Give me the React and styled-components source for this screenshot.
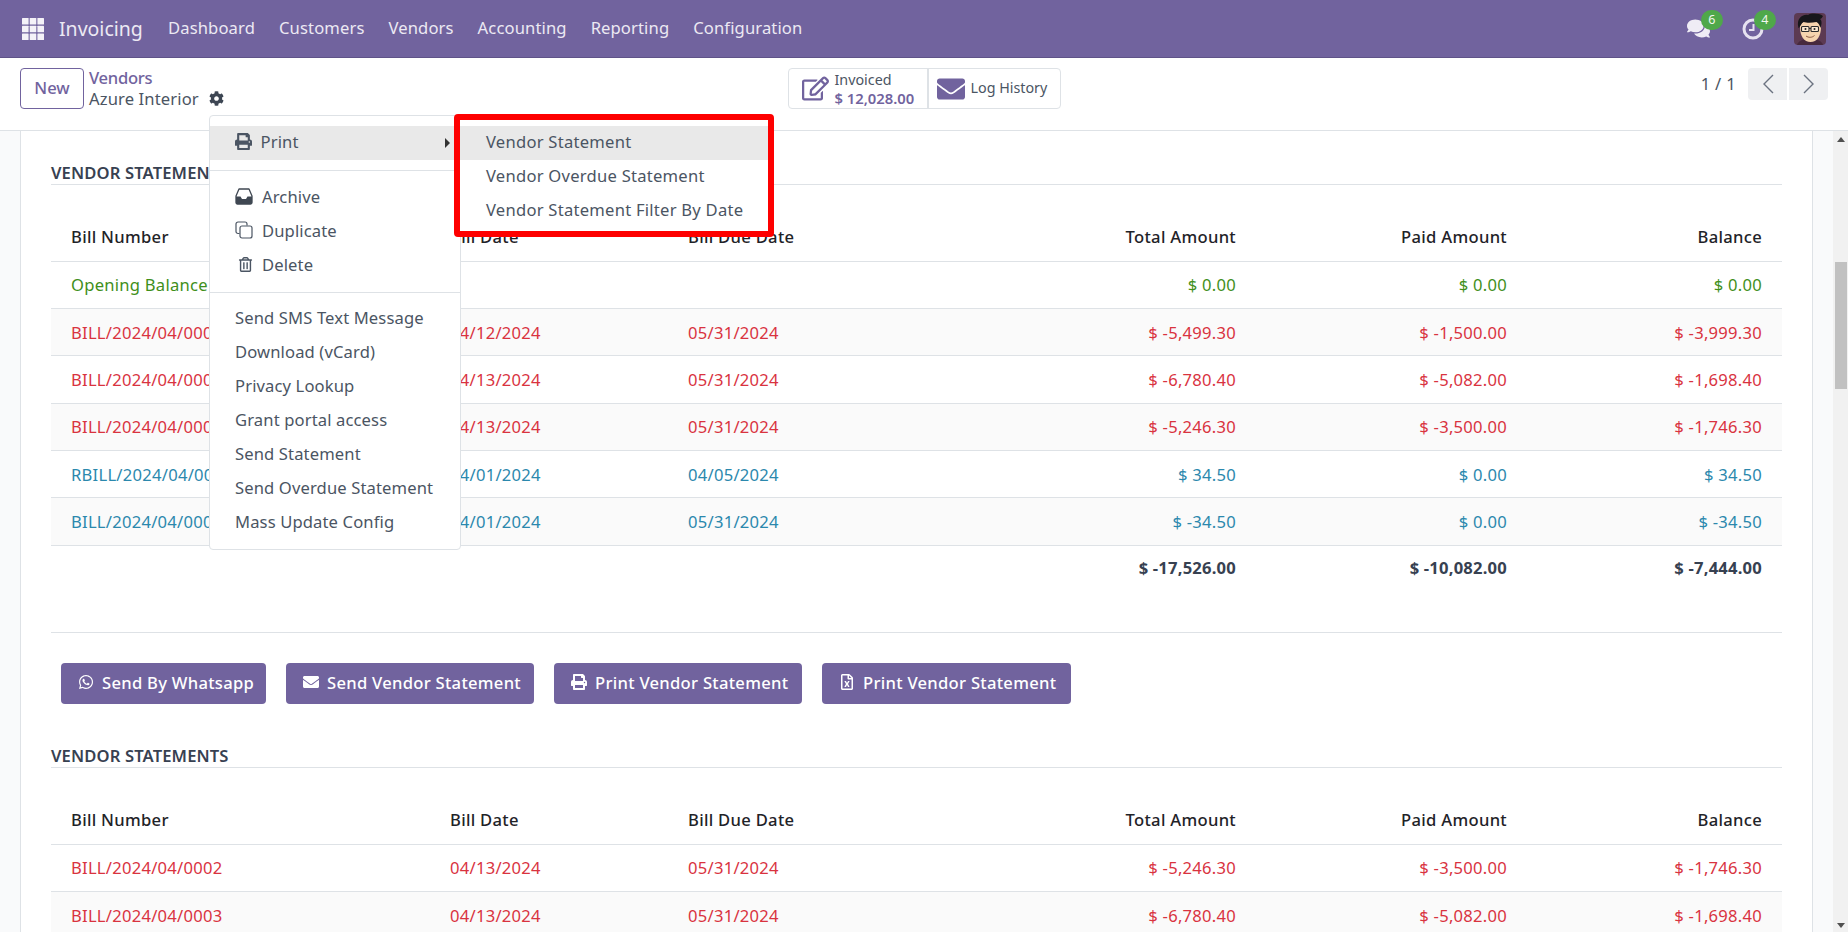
import React from "react";
import styled, { createGlobalStyle } from "styled-components";
import { FaComments, FaCog, FaPrint, FaRegTrashAlt, FaRegEdit, FaEnvelope, FaWhatsapp, FaRegFileExcel } from "react-icons/fa";

const font = `"Noto Sans", "Open Sans", sans-serif`;
const Global = createGlobalStyle`
  html, body { margin: 0; padding: 0; height: 100%; overflow: hidden; background: #fff; }
  body { font-family: ${font}; font-size: 16.6px; letter-spacing: .12px; color: #374151; }
  * { box-sizing: border-box; }
`;

const Page = styled.div`display:flex;flex-direction:column;height:932px;width:1848px;overflow:hidden;position:relative;`;
const NavBar = styled.header`
  height:58px;flex:none;background:#71639e;color:#f3f1f7;display:flex;align-items:center;padding:0 22px 0 22px;border-bottom:1px solid #5f5388;
`;
const AppsIcon = styled.svg`width:22px;height:22px;fill:#f4f2f8;flex:none;`;
const Brand = styled.span`font-size:19.5px;margin-left:15px;width:109px;flex:none;color:#ece9f3;letter-spacing:0;`;
const NavItem = styled.span`margin-right:24px;color:#ece9f3;padding-bottom:2px;`;
const Spacer = styled.div`flex:1;`;
const Systray = styled.div`position:relative;width:24px;height:22px;margin-right:${p=>p.$mr}px;color:#efecf5;display:flex;align-items:center;justify-content:center;`;
const Badge = styled.span`
  position:absolute;left:${p=>p.$l}px;top:-8px;width:22px;height:20px;border-radius:10px;background:#4fa84a;color:#f2f7ef;font-size:12.5px;display:flex;align-items:center;justify-content:center;
`;
const Avatar = styled.svg`width:32px;height:32px;border-radius:4px;flex:none;margin-left:0;`;

const ControlPanel = styled.div`
  height:73px;flex:none;border-bottom:1px solid #dee2e6;background:#fff;display:grid;grid-template-columns:1fr auto 1fr;padding:10px 20px 0 20px;
`;
const CpLeft = styled.div`display:flex;align-items:flex-start;`;
const NewButton = styled.button`
  width:64px;height:41px;border:1px solid #71639e;border-radius:4px;background:#fff;color:#71639e;font:500 16.6px ${font};padding:0 0 2px;
`;
const Crumbs = styled.div`margin-left:5px;display:flex;flex-direction:column;line-height:21px;margin-top:-1px;`;
const CrumbLink = styled.span`color:#71639e;font-weight:500;letter-spacing:-.3px;`;
const CrumbRow = styled.span`display:flex;align-items:center;gap:10px;color:#4b5563;`;
const StatBar = styled.div`display:flex;height:41px;border:1px solid #dee2e6;border-radius:4px;`;
const Stat = styled.div`
  display:flex;align-items:center;gap:${p=>p.$gap}px;width:${p=>p.$w}px;padding-left:${p=>p.$pl}px;
  & + & { border-left:2px solid #dee2e6; }
  svg { color:#71639e; flex:none; }
`;
const StatText = styled.div`display:flex;flex-direction:column;line-height:18px;font-size:14.3px;color:#4b5563;letter-spacing:0;padding-bottom:${p=>p.$pb||0}px;`;
const StatValue = styled.span`color:#71639e;font-weight:600;font-size:14.8px;`;
const Pager = styled.div`display:flex;justify-content:flex-end;align-items:flex-start;`;
const PagerText = styled.span`line-height:32px;margin-right:12px;color:#4b5563;letter-spacing:.3px;`;
const PagerBtn = styled.div`
  width:39px;height:32px;background:#eff0f2;display:flex;align-items:center;justify-content:center;color:#6b7280;margin-left:${p=>p.$ml}px;
  border-radius:${p=>p.$r};
`;

const Body = styled.div`flex:1;display:flex;min-height:0;background:#f9fafb;`;
const Sheet = styled.main`
  margin-left:20px;width:1793px;flex:none;background:#fff;border-left:1px solid #dee2e6;border-right:1px solid #dee2e6;padding:31px 30px 0 30px;overflow:hidden;
`;
const Gutter = styled.div`width:20px;flex:none;`;
const Scrollbar = styled.div`width:15px;flex:none;background:#f1f1f1;display:flex;flex-direction:column;align-items:center;`;
const ScrollArrow = styled.div`
  width:0;height:0;border-left:4px solid transparent;border-right:4px solid transparent;flex:none;
  ${p=>p.$up?"border-bottom:5px solid #505050;margin-top:6px;":"border-top:5px solid #505050;margin-bottom:4px;"}
`;
const Thumb = styled.div`width:12px;height:127px;flex:none;background:#c1c1c1;margin-top:120px;`;
const Fill = styled.div`flex:1;`;

const SectionTitle = styled.h3`
  margin:${p=>p.$mt||0}px 0 0;font-size:16.6px;font-weight:600;line-height:22px;height:23px;border-bottom:1px solid #dee2e6;color:#374151;text-transform:uppercase;
`;
const Table = styled.table`width:1731px;table-layout:fixed;border-collapse:collapse;margin-top:${p=>p.$mt}px;`;
const Col = styled.col`width:${p=>p.$w}px;`;
const HeadCell = styled.th`
  font-weight:500;color:#1f2328;height:48px;padding:0 20px;letter-spacing:.3px;text-align:${p=>p.$right?"right":"left"};border-bottom:1px solid #dee2e6;
`;
const Row = styled.tr`background:${p=>p.$striped?"#fafafa":"#fff"};color:${p=>p.$c};`;
const Cell = styled.td`height:47.4px;padding:0 20px;white-space:nowrap;letter-spacing:.25px;text-align:${p=>p.$right?"right":"left"};border-bottom:1px solid #dee2e6;`;
const TotalCell = styled.td`height:47.2px;padding:0 20px 3px;text-align:right;font-weight:700;color:#374151;letter-spacing:.2px;`;
const Divider = styled.hr`margin:39.4px 0 0;border:0;border-top:1px solid #dee2e6;`;
const Actions = styled.div`display:flex;gap:20px;margin:29.6px 0 0 10px;`;
const ActionBtn = styled.button`
  width:${p=>p.$w}px;height:41px;flex:none;border:0;border-radius:4px;background:#71639e;color:#fff;font:500 16.6px ${font};letter-spacing:.28px;display:flex;align-items:center;gap:8px;padding:0 0 2px 17px;white-space:nowrap;
`;

const Menu = styled.div`
  position:absolute;left:209px;top:115px;width:252px;height:435px;background:#fff;border:1px solid #dee2e6;border-radius:4px;padding-top:10px;color:#4b5563;z-index:5;
`;
const MenuRow = styled.div`
  height:34px;display:flex;align-items:center;padding:0 0 4px 25px;position:relative;white-space:nowrap;
  ${p=>p.$active?"background:#e9e9e9;":""}
`;
const IconSlot = styled.span`width:${p=>p.$w}px;flex:none;display:flex;align-items:center;padding-left:${p=>p.$pl||0}px;`;
const Caret = styled.span`
  position:absolute;right:10px;top:50%;margin-top:-5px;width:0;height:0;border-top:5px solid transparent;border-bottom:5px solid transparent;border-left:5px solid #333;
`;
const MenuSep = styled.div`height:1px;background:#dee2e6;margin:${p=>p.$m};`;
const SubMenu = styled.div`
  position:absolute;left:454px;top:114px;width:320px;height:123px;border:6px solid #fe0000;border-radius:4px;background:#fff;padding-top:6px;color:#4b5563;z-index:6;
`;
const SubRow = styled.div`height:34px;display:flex;align-items:center;padding:0 0 4px 26px;letter-spacing:.24px;${p=>p.$active?"background:#e9e9e9;":""}`;

const heads = ["Bill Number","Bill Date","Bill Due Date","Total Amount","Paid Amount","Balance"];
const RED="#d9333f", BLUE="#2b88ad", GREEN="#3f8f1b";
const rowsA = [
  [GREEN,"Opening Balance","","","$ 0.00","$ 0.00","$ 0.00"],
  [RED,"BILL/2024/04/0001","04/12/2024","05/31/2024","$ -5,499.30","$ -1,500.00","$ -3,999.30"],
  [RED,"BILL/2024/04/0003","04/13/2024","05/31/2024","$ -6,780.40","$ -5,082.00","$ -1,698.40"],
  [RED,"BILL/2024/04/0002","04/13/2024","05/31/2024","$ -5,246.30","$ -3,500.00","$ -1,746.30"],
  [BLUE,"RBILL/2024/04/0001","04/01/2024","04/05/2024","$ 34.50","$ 0.00","$ 34.50"],
  [BLUE,"BILL/2024/04/0004","04/01/2024","05/31/2024","$ -34.50","$ 0.00","$ -34.50"],
];
const rowsB = [
  [RED,"BILL/2024/04/0002","04/13/2024","05/31/2024","$ -5,246.30","$ -3,500.00","$ -1,746.30"],
  [RED,"BILL/2024/04/0003","04/13/2024","05/31/2024","$ -6,780.40","$ -5,082.00","$ -1,698.40"],
];
const Cols = () => (
  <colgroup>
    {[379,238,240,348,271,255].map((w,i)=><Col key={i} $w={w}/>)}
  </colgroup>
);
const Head = () => (
  <thead><tr>{heads.map((h,i)=><HeadCell key={h} $right={i>2}>{h}</HeadCell>)}</tr></thead>
);
const Rows = ({rows}) => rows.map((r,i)=>(
  <Row key={i} $c={r[0]} $striped={i%2===1}>
    {r.slice(1).map((c,j)=><Cell key={j} $right={j>2}>{c}</Cell>)}
  </Row>
));

const Apps = () => (
  <AppsIcon viewBox="0 0 22 22">
    {[0,7.7,15.4].flatMap(y=>[0,7.7,15.4].map(x=><rect key={x+"-"+y} x={x} y={y} width="6.6" height="6.6" rx=".5"/>))}
  </AppsIcon>
);
const Clock = () => (
  <svg width="22" height="22" viewBox="0 0 22 22" fill="none" stroke="#e6e2f0" strokeWidth="3">
    <circle cx="11" cy="11" r="9"/>
    <path d="M11.5 6v6H7" strokeWidth="2" />
  </svg>
);
const Chevron = ({left}) => (
  <svg width="12" height="20" viewBox="0 0 12 20" fill="none" stroke="currentColor" strokeWidth="1.4">
    <path d={left?"M11 1 2 10l9 9":"M1 1l9 9-9 9"}/>
  </svg>
);
const InboxIcon = () => (
  <svg width="18" height="17" viewBox="0 0 18 17">
    <path d="M4 1h10l3 7v6.500a1.500 1.500 0 0 1-1.500 1.500h-13A1.500 1.500 0 0 1 1 14.500V8z" fill="none" stroke="#3f4752" strokeWidth="1.300" strokeLinejoin="round"/>
    <path d="M1 8.500h4.500l1.500 2.500h4l1.500-2.500H17v6a1.500 1.500 0 0 1-1.500 1.500h-13A1.500 1.500 0 0 1 1 14.500z" fill="#3f4752"/>
  </svg>
);
const CloneIcon = () => (
  <svg width="18" height="18" viewBox="0 0 18 18" fill="none" stroke="#4b5563" strokeWidth="1.200">
    <path d="M4.500 12.500H3A2 2 0 0 1 1 10.500V3a2 2 0 0 1 2-2h7a2 2 0 0 1 2 2v1.500"/>
    <rect x="5" y="5" width="12" height="12" rx="2"/>
  </svg>
);
const Face = () => (
  <Avatar viewBox="0 0 32 32">
    <rect width="32" height="32" fill="#5c3a52"/>
    <path d="M3 32c1-4 6-6 13-6s12 2 13 6z" fill="#47293d"/>
    <path d="M6 14c0 9 4 15 10.500 15S27 23 27 14s-21-9-21 0z" fill="#f6d3ae"/>
    <path d="M4.500 15C2 6 8 1 14 2c3-2 11-2 15 1-1 2-2 3-3 3 2.500 2 1.500 6 .5 9-1-3-2-5-4-6-5 1-10 1-13 0-2 1-3 4-4.500 6z" fill="#17171b"/>
    <rect x="7.500" y="13.500" width="7.500" height="5" rx="1" fill="#fbe7cf" stroke="#2a2a2c" strokeWidth="1.100"/>
    <rect x="17" y="13.500" width="7.500" height="5" rx="1" fill="#fbe7cf" stroke="#2a2a2c" strokeWidth="1.100"/>
    <path d="M15 15.500h2" stroke="#2a2a2c" strokeWidth="1"/>
    <circle cx="11.500" cy="16" r="1" fill="#222"/><circle cx="20.500" cy="16" r="1" fill="#222"/>
    <path d="M12 23c2.500 1.800 6 1.800 8.500-.5" stroke="#8a5a42" strokeWidth="1" fill="none"/>
  </Avatar>
);

export default function App() {
  return (
    <Page>
      <Global/>
      <NavBar>
        <Apps/>
        <Brand>Invoicing</Brand>
        {["Dashboard","Customers","Vendors","Accounting","Reporting","Configuration"].map(n=><NavItem key={n}>{n}</NavItem>)}
        <Spacer/>
        <Systray $mr={31}><FaComments size={23}/><Badge $l={15}>6</Badge></Systray>
        <Systray $mr={29}><Clock/><Badge $l={13}>4</Badge></Systray>
        <Face/>
      </NavBar>
      <ControlPanel>
        <CpLeft>
          <NewButton>New</NewButton>
          <Crumbs>
            <CrumbLink>Vendors</CrumbLink>
            <CrumbRow>Azure Interior <FaCog size={15} color="#3d4653"/></CrumbRow>
          </Crumbs>
        </CpLeft>
        <StatBar>
          <Stat $w={138} $pl={13} $gap={6}>
            <FaRegEdit size={27}/>
            <StatText><span>Invoiced</span><StatValue>$ 12,028.00</StatValue></StatText>
          </Stat>
          <Stat $w={133} $pl={8} $gap={6}>
            <FaEnvelope size={28}/>
            <StatText $pb={2}><span>Log History</span></StatText>
          </Stat>
        </StatBar>
        <Pager>
          <PagerText>1 / 1</PagerText>
          <PagerBtn $r="4px 0 0 4px"><Chevron left/></PagerBtn>
          <PagerBtn $ml={2} $r="0 4px 4px 0"><Chevron/></PagerBtn>
        </Pager>
      </ControlPanel>
      <Body>
        <Sheet>
          <SectionTitle>Vendor Statements</SectionTitle>
          <Table $mt={28}>
            <Cols/>
            <Head/>
            <tbody>
              <Rows rows={rowsA}/>
              <tr>
                <TotalCell/><TotalCell/><TotalCell/>
                <TotalCell>$ -17,526.00</TotalCell><TotalCell>$ -10,082.00</TotalCell><TotalCell>$ -7,444.00</TotalCell>
              </tr>
            </tbody>
          </Table>
          <Divider/>
          <Actions>
            <ActionBtn $w={205}><FaWhatsapp size={16}/>Send By Whatsapp</ActionBtn>
            <ActionBtn $w={248}><FaEnvelope size={16}/>Send Vendor Statement</ActionBtn>
            <ActionBtn $w={248}><FaPrint size={16}/>Print Vendor Statement</ActionBtn>
            <ActionBtn $w={249}><FaRegFileExcel size={16}/>Print Vendor Statement</ActionBtn>
          </Actions>
          <SectionTitle $mt={41}>Vendor Statements</SectionTitle>
          <Table $mt={28.5}>
            <Cols/>
            <Head/>
            <tbody><Rows rows={rowsB}/></tbody>
          </Table>
        </Sheet>
        <Gutter/>
        <Scrollbar>
          <ScrollArrow $up/>
          <Thumb/>
          <Fill/>
          <ScrollArrow/>
        </Scrollbar>
      </Body>
      <Menu>
        <MenuRow $active><IconSlot $w={25.5}><FaPrint size={17}/></IconSlot>Print<Caret/></MenuRow>
        <MenuSep $m="10px 0 10px"/>
        <MenuRow><IconSlot $w={27}><InboxIcon/></IconSlot>Archive</MenuRow>
        <MenuRow><IconSlot $w={27}><CloneIcon/></IconSlot>Duplicate</MenuRow>
        <MenuRow><IconSlot $w={27} $pl={3}><FaRegTrashAlt size={15}/></IconSlot>Delete</MenuRow>
        <MenuSep $m="9px 0 9.2px"/>
        {["Send SMS Text Message","Download (vCard)","Privacy Lookup","Grant portal access","Send Statement","Send Overdue Statement","Mass Update Config"].map(t=><MenuRow key={t}>{t}</MenuRow>)}
      </Menu>
      <SubMenu>
        <SubRow $active>Vendor Statement</SubRow>
        <SubRow>Vendor Overdue Statement</SubRow>
        <SubRow>Vendor Statement Filter By Date</SubRow>
      </SubMenu>
    </Page>
  );
}
